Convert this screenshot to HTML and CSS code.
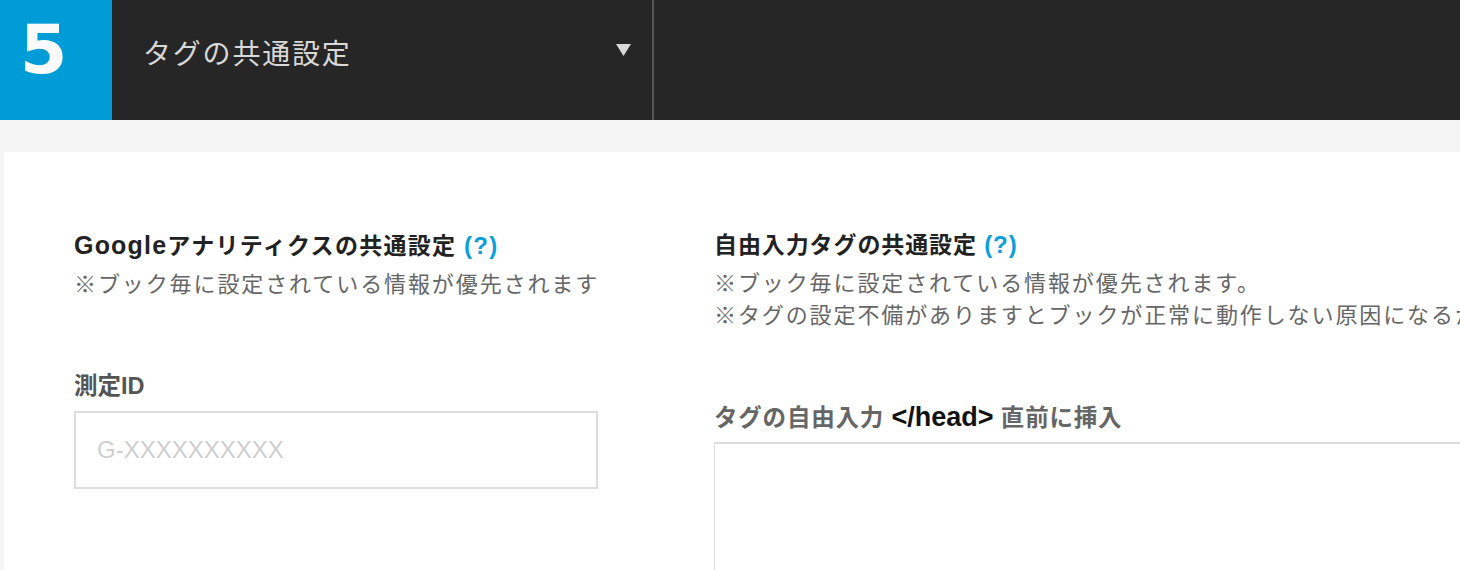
FILE: index.html
```html
<!DOCTYPE html>
<html lang="ja">
<head>
<meta charset="utf-8">
<title>タグの共通設定</title>
<link rel="stylesheet" href="styles.css">
</head>
<body>
<header class="topbar">
  <div class="step-num">5</div>
  <div class="step-title">
    <span class="step-title-text">タグの共通設定</span>
    <svg class="caret" width="15" height="12" viewBox="0 0 15 12"><polygon points="0,0 15,0 7.5,12" fill="#d9d9d9"/></svg>
  </div>
  <div class="topbar-rest"></div>
</header>
<main class="page">
  <section class="card">
    <div class="col col-left">
      <h2 class="sec-title"><span class="latin">Google</span>アナリティクスの共通設定 <span class="help">(?)</span></h2>
      <p class="note">※ブック毎に設定されている情報が優先されます</p>
      <label class="field-label label-id">測定ID</label>
      <div class="input-box"><span class="placeholder">G-XXXXXXXXXX</span></div>
    </div>
    <div class="col col-right">
      <h2 class="sec-title">自由入力タグの共通設定 <span class="help">(?)</span></h2>
      <p class="note">※ブック毎に設定されている情報が優先されます。<br>※タグの設定不備がありますとブックが正常に動作しない原因になるかもしれません。</p>
      <label class="field-label label-tag">タグの自由入力 <span class="code">&lt;/head&gt;</span> 直前に挿入</label>
      <div class="textarea-box"></div>
    </div>
  </section>
</main>
</body>
</html>
```
FILE: styles.css
```css
html, body {
  margin: 0;
  padding: 0;
}
body {
  width: 1460px;
  height: 570px;
  overflow: hidden;
  background: #f5f5f5;
  font-family: "Liberation Sans", "Noto Sans CJK JP", sans-serif;
}
.topbar {
  display: flex;
  height: 120px;
  background: #262626;
}
.step-num {
  width: 112px;
  flex: 0 0 112px;
  background: #009cd7;
  color: #fafafa;
  font-family: "DejaVu Sans", sans-serif;
  font-weight: bold;
  font-size: 68px;
  line-height: 1;
  display: flex;
  align-items: center;
  padding-left: 20px;
  box-sizing: border-box;
  padding-bottom: 20px;
}
.step-title {
  width: 542px;
  flex: 0 0 542px;
  box-sizing: border-box;
  border-right: 2px solid #555;
  display: flex;
  align-items: center;
  padding-left: 31px;
  padding-right: 21px;
  padding-bottom: 22px;
}
.step-title-text {
  flex: 1;
  color: #d8d8d8;
  font-size: 28px;
  letter-spacing: 1.8px;
  font-family: "Noto Sans CJK JP", sans-serif;
  padding-top: 6px;
}
.caret {
  margin-top: 2px;
}
.topbar-rest {
  flex: 1;
}
.page {
  padding: 32px 0 0 4px;
}
.card {
  background: #fff;
  height: 460px;
  display: grid;
  grid-template-columns: 524px 1fr;
  column-gap: 116px;
  padding: 78px 0 0 70px;
  overflow: hidden;
  white-space: nowrap;
}
.col {
  display: flex;
  flex-direction: column;
  min-width: 0;
  overflow: hidden;
}
.sec-title {
  margin: 0;
  font-size: 23px;
  line-height: 30px;
  font-weight: bold;
  color: #222;
  letter-spacing: 0.9px;
}
.latin {
  font-size: 25px;
  letter-spacing: 1.2px;
}
.col-left .sec-title {
  letter-spacing: 1.3px;
}
.help {
  color: #0aa0da;
  font-size: 24px;
}
.note {
  margin: 8px 0 0;
  font-size: 22px;
  line-height: 32px;
  color: #666;
  letter-spacing: 1.9px;
}
.field-label {
  display: block;
  font-size: 23.5px;
  line-height: 30px;
  font-weight: bold;
  color: #555;
}
.label-id {
  margin-top: 70px;
}
.label-tag {
  margin-top: 70px;
  color: #666;
  font-size: 23.5px;
  letter-spacing: 0.8px;
}
.code {
  color: #111;
  font-size: 27px;
  letter-spacing: 0;
}
.input-box {
  margin-top: 10px;
  height: 78px;
  border: 2px solid #ddd;
  box-sizing: border-box;
  display: flex;
  align-items: center;
  padding-left: 21px;
}
.placeholder {
  font-size: 24px;
  color: #cfcfcf;
}
.textarea-box {
  margin-top: 9px;
  height: 200px;
  margin-left: -1px;
  border: 2px solid #ddd;
  border-right: none;
  box-sizing: border-box;
}
```
